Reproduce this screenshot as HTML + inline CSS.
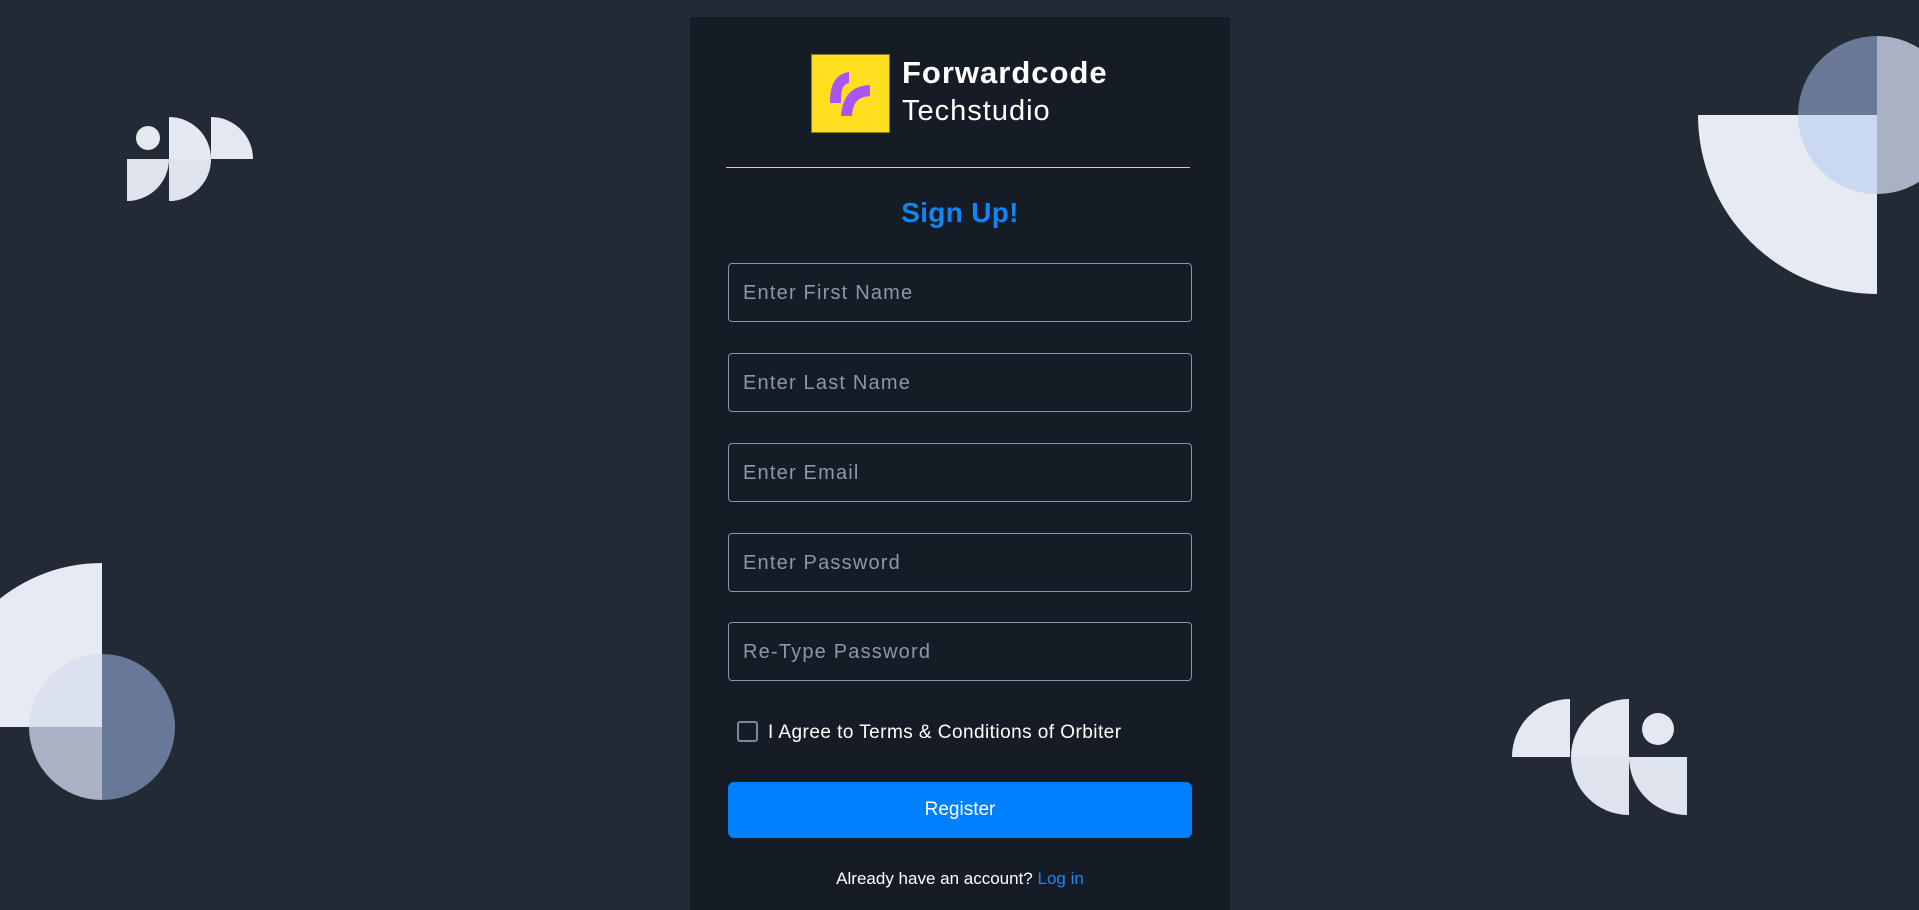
<!DOCTYPE html>
<html><head><meta charset="utf-8"><style>
html,body{margin:0;padding:0;width:1919px;height:910px;overflow:hidden;background:#212a35;font-family:"Liberation Sans",sans-serif}
svg.bg{position:absolute;left:0;top:0}
.card{position:absolute;left:690px;top:17px;width:540px;height:893px;background:#161c25}
.logo{position:absolute;left:121px;top:37px;width:79px;height:79px;background:#ffde1f;border:1px solid #8a7a10;box-sizing:border-box}
.t1{position:absolute;left:212px;top:38px;color:#fff;font-weight:bold;font-size:31px;letter-spacing:1px}
.t2{position:absolute;left:212px;top:78px;color:#fff;font-size:29px;letter-spacing:1px}
.hr{position:absolute;left:36px;top:150px;width:464px;height:1px;background:#c9ccd2}
.h{position:absolute;left:0;width:540px;top:180px;text-align:center;color:#1285f5;font-size:28px;font-weight:bold;letter-spacing:.3px}
.in{position:absolute;left:38px;width:464px;height:59px;box-sizing:border-box;border:1px solid #8a93a6;border-radius:4px;color:#8d97a8;font-size:20px;line-height:59px;padding-left:14px;letter-spacing:1.2px}
.cb{position:absolute;left:47px;top:704px;width:21px;height:21px;box-sizing:border-box;border:2px solid #7c879a;border-radius:3px}
.agree{position:absolute;left:78px;top:705px;color:#fff;font-size:19px;letter-spacing:.45px}
.btn{position:absolute;left:38px;top:765px;width:464px;height:56px;background:#0080ff;border-radius:6px;color:#fff;text-align:center;line-height:56px;font-size:19px}
.al{position:absolute;left:0;width:540px;top:852px;text-align:center;color:#fff;font-size:17px}
.al span{color:#1a88f5}
</style></head><body>
<svg class="bg" width="1919" height="910" viewBox="0 0 1919 910">
<circle cx="148" cy="138" r="12" fill="#e4e8f1"/>
<path d="M127 159 H169 A42 42 0 0 1 127 201 Z" fill="#dfe3ed"/>
<path d="M169 117 A42 42 0 0 1 169 201 Z" fill="#e4e8f1"/>
<path d="M169 159 H211 A42 42 0 0 1 169 201Z" fill="#dfe3ed"/>
<path d="M211 117 A42 42 0 0 1 253 159 H211Z" fill="#e4e8f1"/>
<path d="M1512 757 A58 58 0 0 1 1570 699 V757Z" fill="#e4e8f1"/>
<path d="M1571 757 A58 58 0 0 1 1629 699 V757Z" fill="#e4e8f1"/>
<path d="M1571 757 H1629 V815 A58 58 0 0 1 1571 757Z" fill="#dfe3ed"/>
<path d="M1629 757 H1687 V815 A58 58 0 0 1 1629 757Z" fill="#dfe3ed"/>
<circle cx="1658" cy="729" r="16" fill="#e4e8f1"/>
<path d="M1698 115 H1877 V294 A179 179 0 0 1 1698 115Z" fill="#e6eaf2"/>
<path d="M1798 115 A79 79 0 0 1 1877 36 V115Z" fill="#6a7897"/>
<path d="M1798 115 H1877 V194 A79 79 0 0 1 1798 115Z" fill="#cbd8f1"/>
<path d="M1877 36 A79 79 0 0 1 1877 194Z" fill="#a8b2c4"/>
<path d="M-62 727 A164 164 0 0 1 102 563 V727Z" fill="#e6eaf2"/>
<path d="M29 727 A73 73 0 0 1 102 654 V727Z" fill="#dce1f0"/>
<path d="M29 727 H102 V800 A73 73 0 0 1 29 727Z" fill="#a8b2c4"/>
<path d="M102 654 A73 73 0 0 1 102 800Z" fill="#6a7897"/>
</svg>
<div class="card">
<div class="logo"><svg width="77" height="77" viewBox="0 0 77 77"><path d="M37 17 C25 19 18 27 18 48 H29 C29 34 31 29 37 28Z" fill="#a855f7"/><path d="M58 30 C42 31 31 38 29 61 H40 C41 47 46 42 58 41Z" fill="#a855f7"/></svg></div>
<div class="t1">Forwardcode</div>
<div class="t2">Techstudio</div>
<div class="hr"></div>
<div class="h">Sign Up!</div>
<div class="in" style="top:246px">Enter First Name</div>
<div class="in" style="top:336px">Enter Last Name</div>
<div class="in" style="top:426px">Enter Email</div>
<div class="in" style="top:516px">Enter Password</div>
<div class="in" style="top:605px">Re-Type Password</div>
<div class="cb"></div>
<div class="agree">I Agree to Terms &amp; Conditions of Orbiter</div>
<div class="btn">Register</div>
<div class="al">Already have an account? <span>Log in</span></div>
</div>
</body></html>
